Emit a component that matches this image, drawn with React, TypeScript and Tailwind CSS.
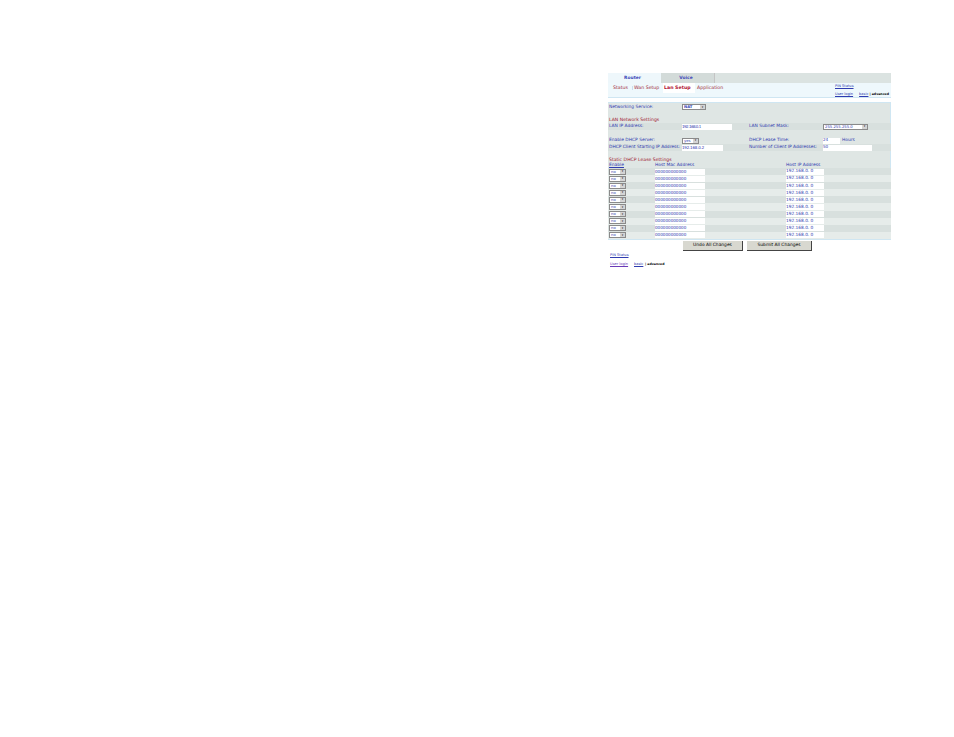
const blue = "text-[#2f3bb0]";
const rows = Array.from({ length: 10 }, (_, i) => i);

const Select = ({ label, w, bold = false }: { label: string; w: string; bold?: boolean }) => (
  <div className={`flex h-[6px] items-center justify-between border border-[#8a8a8a] bg-white pl-[1px] ${w}`}>
    <span className={`text-[3.8px] leading-none text-[#2f3bb0] ${bold ? "font-bold" : ""}`}>{label}</span>
    <span className="flex h-full w-[5px] items-center justify-center bg-[#d4d4d4] text-[3px] leading-none text-[#222]">▾</span>
  </div>
);

const Field = ({ text, w, size = "text-[4.1px]" }: { text: string; w: string; size?: string }) => (
  <div className={`flex h-[6px] items-center whitespace-nowrap bg-white leading-none ${size} ${blue} ${w}`}>{text}</div>
);

const Row = ({ h, children, className = "" }: { h: string; children: React.ReactNode; className?: string }) => (
  <div className={`flex items-center ${h} ${className}`}>{children}</div>
);

const Label = ({ children, w }: { children: React.ReactNode; w: string }) => (
  <span className={`whitespace-nowrap text-[4.4px] leading-none ${blue} ${w}`}>{children}</span>
);

export default function App() {
  return (
    <div className="h-[737px] w-[954px] bg-white pl-[608px] pt-[73px] font-['DejaVu_Sans',sans-serif]">
      <div className="w-[283px]">
        {/* tabs */}
        <div className="flex h-[10px] bg-[#dbe3e1] text-[4.4px] font-bold leading-none">
          <div className="flex w-[53px] items-center justify-center bg-[#eef7fb] pr-[4px] text-[#3a46b8]">Router</div>
          <div className="flex w-[54px] items-center justify-center border-r border-[#c4c4c4] bg-[#d3dbd9] pr-[3px] text-[#3a46b8]">Voice</div>
        </div>
        <div className="flex h-[14px] items-start bg-[#eef8fc]">
          <div className="flex h-[10px] items-center text-[4.7px] leading-none text-[#a02838]">
            <span className="w-[24px] pl-[5px]">Status</span>
            <span className="w-[31px] border-l border-[#cde] pl-[1px]">Wan Setup</span>
            <span className="flex h-full w-[32px] items-center bg-white pl-[1px] font-bold text-[#b01030]">Lan Setup</span>
            <span className="pl-[2px]">Application</span>
          </div>
          <div className="ml-auto flex w-[56px] flex-col gap-[4px] pt-[2px] text-[3.6px] leading-none">
            <span className={`${blue} underline`}>PIN Status</span>
            <div className="flex gap-[6px] whitespace-nowrap">
              <span className={`${blue} underline`}>User login</span>
              <div className="flex gap-[1px]">
                <span className={`${blue} underline`}>basic</span>
                <span className="text-[3.2px] font-bold text-black">| advanced</span>
              </div>
            </div>
          </div>
        </div>
        <div className="h-[6px] border-y border-[#cfe6f2] bg-white" />

        {/* settings */}
        <div className="border-b border-r border-[#cfe6f2] bg-[#dfe6e4] pl-[1px] pt-[1px]">
          <Row h="h-[6px]">
            <Label w="w-[73px]">Networking Service:</Label>
            <Select label="NAT" w="w-[24px]" bold />
          </Row>
          <div className="mt-[7px] flex h-[6px] items-center text-[4.6px] leading-none text-[#a02030]">LAN Network Settings</div>
          <Row h="h-[7px]" className="-mx-[1px] bg-[#d8e0de] px-[1px]">
            <Label w="w-[73px]">LAN IP Address:</Label>
            <Field text="192.168.0.1" w="w-[50px]" size="text-[4px] tracking-[-0.5px]" />
            <Label w="ml-[17px] w-[74px]">LAN Subnet Mask:</Label>
            <Select label="255.255.255.0" w="w-[45px]" />
          </Row>
          <div className="h-[7px]" />
          <Row h="h-[7px]">
            <Label w="w-[73px]">Enable DHCP Server:</Label>
            <Select label="yes" w="w-[17px]" />
            <Label w="ml-[50px] w-[74px]">DHCP Lease Time:</Label>
            <Field text="24" w="w-[17px]" />
            <Label w="ml-[2px]">Hours</Label>
          </Row>
          <Row h="h-[7px]" className="-mx-[1px] bg-[#d8e0de] px-[1px]">
            <Label w="w-[73px]">DHCP Client Starting IP Address:</Label>
            <Field text="192.168.0.2" w="w-[41px]" size="text-[4px] tracking-[-0.2px]" />
            <Label w="ml-[26px] w-[74px]">Number of Client IP Addresses:</Label>
            <Field text="50" w="w-[49px]" />
          </Row>
          <div className="mt-[6px] flex h-[6px] items-center text-[4.6px] leading-none text-[#a02030]">Static DHCP Lease Settings</div>
          <Row h="h-[5px]">
            <Label w="w-[46px] underline">Enable</Label>
            <Label w="w-[131px]">Host Mac Address</Label>
            <Label w="">Host IP Address</Label>
          </Row>
          {rows.map((i) => (
            <Row key={i} h="h-[7.1px]" className={`-mx-[1px] px-[1px] ${i % 2 === 0 ? "bg-[#d8e0de]" : "bg-[#e6ecea]"}`}>
              <div className="w-[46px]">
                <Select label="no" w="w-[17px]" />
              </div>
              <Field text="000000000000" w="w-[50px]" />
              <div className="w-[81px]" />
              <Field text="192.168.0. 0" w="w-[38px]" size="text-[4.3px]" />
            </Row>
          ))}
        </div>

        {/* buttons */}
        <div className="mt-[1px] flex h-[10px] gap-[4px] pl-[75px]">
          <div className="flex w-[60px] items-center justify-center border-b border-r border-[#444] bg-[#d8d8d0] text-[4.4px] leading-none text-black">Undo All Changes</div>
          <div className="flex w-[65px] items-center justify-center border-b border-r border-[#444] bg-[#d8d8d0] text-[4.4px] leading-none text-black">Submit All Changes</div>
        </div>

        <div className={`mt-[3px] pl-[2px] text-[3.6px] leading-none underline ${blue}`}>PIN Status</div>
        <div className="mt-[5px] flex whitespace-nowrap pl-[2px] text-[3.6px] leading-none">
          <span className="w-[24px] text-[#6a3ab8] underline">User login</span>
          <span className={`w-[9px] underline ${blue}`}>basic</span>
          <span className="pl-[2px] text-[3.2px] font-bold text-black">| advanced</span>
        </div>
      </div>
    </div>
  );
}
